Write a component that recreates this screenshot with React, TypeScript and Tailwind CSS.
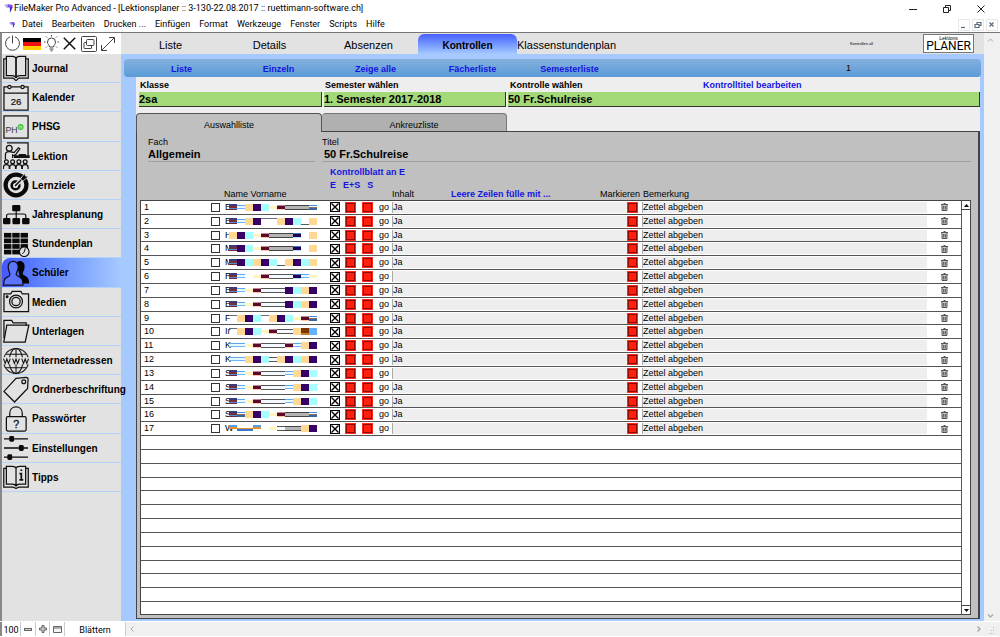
import React from "react";

const stroke = { fill: "none", stroke: "#111", strokeWidth: 1.3 } as const;

const icons: Record<string, React.ReactNode> = {
  Journal: (
    <g {...stroke}>
      <path d="M3.5 4H.8v20h9.5c1.6 0 1.8 2.2 3.2 2.2s1.600-2.200 3.200-2.200h9.500V4h-2.700" />
      <path d="M3.500 1.500h6c2.500 0 4 1.200 4 3.200v19c-.5-1.600-2-2.400-4-2.400h-6z" />
      <path d="M23.500 1.500h-6c-2.500 0-4 1.200-4 3.200v19c.5-1.600 2-2.400 4-2.400h6z" />
    </g>
  ),
  Kalender: (
    <g {...stroke}>
      <path d="M5 3H1v24h25V3h-4M8.500 3h10M1 9.500h25" />
      <circle cx="6.700" cy="3" r="1.700" />
      <circle cx="20.300" cy="3" r="1.700" />
      <text x="8" y="22" fontSize="10" fontWeight="400" fill="#111" stroke="#111" strokeWidth=".2">26</text>
    </g>
  ),
  PHSG: (
    <g {...stroke}>
      <rect x="1" y="3" width="25" height="23" />
      <text x="2.500" y="20.500" fontSize="9" fontWeight="400" fill="#333" stroke="none">PH</text>
      <circle cx="18.200" cy="14.500" r="3.200" fill="#4fc646" stroke="none" />
      <path d="M16.500 14h3.500M16.500 15.500h3.500" stroke="#c9f5c5" strokeWidth=".7" />
    </g>
  ),
  Lektion: (
    <g {...stroke}>
      <path d="M4 1h22v14" />
      <circle cx="6.500" cy="6.500" r="3" fill="#e2e2e2" />
      <path d="M2.500 18v-5c0-2 1.500-3 4-3 3 0 4 1.500 5.500.5L16 6l1.500 1.200-4 5.300c-1 1.200-2.500 1.500-3.500 1v3" />
      <path d="M12 16v-1.500h5V13h6v1.500h4V16z" fill="#111" />
      {[3.5, 10, 16.5, 23].map((x) => (
        <g key={x}>
          <circle cx={x} cy="20.500" r="2" />
          <path d={`M${x - 3} 28v-2c0-1.800 1-2.600 3-2.600s3 .8 3 2.600v2`} />
        </g>
      ))}
    </g>
  ),
  Lernziele: (
    <g>
      <circle cx="13.500" cy="14.500" r="10.800" fill="none" stroke="#0a0a0a" strokeWidth="4.400" />
      <circle cx="13" cy="15" r="4" fill="none" stroke="#0a0a0a" strokeWidth="2.600" />
      <path d="M13 15L21 7" stroke="#e2e2e2" strokeWidth="4" />
      <path d="M12.500 15.500L22 6" stroke="#0a0a0a" strokeWidth="1.500" />
      <path d="M18.500 7.500l4-5 .8 2.700 3 .6-4.800 4-2.500.2z" fill="#0a0a0a" stroke="#e2e2e2" strokeWidth=".8" />
    </g>
  ),
  Jahresplanung: (
    <g fill="#0a0a0a">
      <rect x="9.500" y="4" width="8.500" height="6.500" rx="1.300" />
      <rect x="0" y="17.500" width="7.700" height="6.500" rx="1.300" />
      <rect x="9.800" y="17.500" width="7.900" height="6.500" rx="1.300" />
      <rect x="19.800" y="17.500" width="7.700" height="6.500" rx="1.300" />
      <path d="M13.700 10v8M3.700 18v-2.500q0-2 2-2h16q2 0 2 2V18" fill="none" stroke="#0a0a0a" strokeWidth="1.200" />
    </g>
  ),
  Stundenplan: (
    <g fill="#0a0a0a">
      {[0, 1, 2, 3].map((r) =>
        [0, 1, 2].map((c) => (
          <rect key={`${r}${c}`} x={1 + c * 8.6} y={3 + r * 5.8} width="7.700" height="4.900" />
        )),
      )}
      <circle cx="22" cy="22.500" r="5" fill="#e2e2e2" stroke="#0a0a0a" strokeWidth="1.200" />
      <path d="M23 19l-1 4-2 1.500" fill="none" stroke="#0a0a0a" />
    </g>
  ),
  Schüler: (
    <g>
      <path d="M14 4c1.500-2 3.500-2.500 5.500-1.500 3 1 3.300 4.500 2.600 8-.5 2-1.700 3-1.600 5 1 2 6.200 2 6.500 8v2h-8z" fill="#050505" />
      <path
        d="M10.500 2.500c3.500 0 5.500 2.500 5.200 6.500-.2 3-2 4.500-2 7 .8 2 6.300 2.500 6.800 7.500l.1 3.500H.8c-.2-3 .2-5.500 1.700-7 2-1.500 4.500-1.700 4.700-4C7 14 5.600 12 5.400 9c-.3-4 1.600-6.500 5.100-6.500z"
        fill="#5c74ff" stroke="#111" strokeWidth="1.300"
      />
    </g>
  ),
  Medien: (
    <g {...stroke}>
      <path d="M1 6h7l1.500-2.500h9L20 6h6.500v18.500H1z" />
      <circle cx="13.500" cy="14" r="6.700" />
      <circle cx="13.500" cy="14" r="4.300" />
      <circle cx="4.300" cy="9" r=".9" fill="#111" />
    </g>
  ),
  Unterlagen: (
    <g {...stroke}>
      <path d="M1 22V3.500h8l1.500 2.500H24v3" />
      <path d="M4 8.500h22.800L23 26H.8z" />
    </g>
  ),
  Internetadressen: (
    <g {...stroke} strokeWidth={1.1}>
      <circle cx="13.500" cy="14.500" r="13" />
      <ellipse cx="13.500" cy="14.500" rx="7" ry="13" />
      <path d="M13.500 1.500v26M3 7.500h21M3 21.500h21" />
      <rect x="0" y="10.500" width="27" height="7.500" fill="#e2e2e2" stroke="none" />
      <path d="M.5 12l1.800 5L4 12.500l1.700 4.500L7.500 12M10 12l1.800 5 1.700-4.500 1.700 4.500 1.800-5M19.500 12l1.800 5 1.700-4.500 1.700 4.500 1.800-5" />
    </g>
  ),
  Ordnerbeschriftung: (
    <g {...stroke}>
      <path d="M13.500 2.500L24 1.500q2 0 2 2l-.5 9.500L12 27 1 16z" />
      <circle cx="21.500" cy="6" r="2" />
    </g>
  ),
  Passwörter: (
    <g {...stroke}>
      <rect x="3.500" y="12" width="20.500" height="15" rx="1.500" />
      <path d="M7 12V8.500c0-4 2.800-6.500 6.500-6.500S20 4.500 20 8.500V12" />
      <text x="10.500" y="23.500" fontSize="11" fontWeight="400" fill="#111" stroke="#111" strokeWidth=".3">?</text>
    </g>
  ),
  Einstellungen: (
    <g fill="#0a0a0a">
      <path d="M1 5h25M1 14.500h25M1 24h25" stroke="#0a0a0a" strokeWidth="1.300" />
      <rect x="6.500" y="2" width="5" height="6" rx="1.500" />
      <rect x="16.500" y="11.500" width="5" height="6" rx="1.500" />
      <rect x="4.500" y="21" width="5" height="6" rx="1.500" />
    </g>
  ),
  Tipps: (
    <g {...stroke}>
      <path d="M3.500 5.500H.8V25h9.500c1.600 0 1.800 1.200 3.200 1.200s1.600-1.200 3.200-1.200h9.500V5.500h-2.700" />
      <path d="M3.500 3.500h6c2.500 0 4 1 4 2.500v18c-.5-1.300-2-2-4-2h-6zM23.500 3.500h-6c-2.500 0-4 1-4 2.500v18c.5-1.300 2-2 4-2h6z" />
      <path d="M17 11h2v6.500M17 17.500h4M18 7.500h2" strokeWidth="1.800" />
    </g>
  ),
};

const students: [string, string, boolean][] = [
  ["B", "mbopcydgggt", true],
  ["B", "mbopuuopclo", true],
  ["H", "opcydgggk.o", true],
  ["M", "mpcydgggk.o", true],
  ["M", "mpcopclopco", true],
  ["R", "mb.ydwwwkby", false],
  ["B", "mbydwwwpcop", true],
  ["B", "mbydwwwpcop", true],
  ["F", "uopcuopcydt", true],
  ["Ir", "uopcydwwonB", true],
  ["K", "bbydwwwdbop", true],
  ["K", "bbopcwopcop", true],
  ["S", "mbydwwwbopc", false],
  ["S", "mbydwwwbopc", true],
  ["S", "mbydwwwbopc", true],
  ["S", "mtopcydgggt", true],
  ["W", "vxxv.ywggop", false],
];

/* Each letter is one 8px block: a list of [top, height, colour] bands. */
const bands: Record<string, [number, number, string][]> = {
  m: [[1, 2, "#3a3a80"], [3, 2, "#7a2f2f"], [5, 1, "#4f8fe0"], [6, 1, "#702838"]],
  b: [[2, 1, "#5aa8f0"], [3, 2, "#e8faff"], [5, 1, "#6ab6ff"]],
  o: [[1, 7, "#ffd994"]],
  p: [[1, 7, "#360066"]],
  c: [[1, 7, "#a6ffff"]],
  y: [[3, 3, "#fff5bd"]],
  d: [[2, 1, "#c08888"], [3, 3, "#5a0a2c"], [6, 1, "#ffc8a0"]],
  g: [[2, 1, "#444444"], [3, 3, "#b4b4b4"], [6, 1, "#444444"]],
  w: [[2, 1, "#555555"], [3, 3, "#f4f8ff"], [6, 1, "#555555"]],
  k: [[2, 1, "#3a78c8"], [3, 3, "#240052"], [6, 1, "#b0e0ff"]],
  t: [[2, 1, "#3a90e0"], [4, 1, "#8a7060"], [5, 2, "#3868a0"]],
  u: [[1, 1, "#666f80"]],
  l: [[7, 1, "#55606a"]],
  v: [[1, 2, "#4fa0f0"], [3, 2, "#e09030"]],
  x: [[4, 1, "#e09030"], [5, 2, "#3a78c8"]],
  n: [[1, 5, "#7a3800"], [6, 2, "#c08030"]],
  B: [[1, 7, "#62b0ff"]],
};

const NameBlur = ({ code }: { code: string }) => (
  <svg width="88" height="9" shapeRendering="crispEdges" className="shrink-0" aria-hidden="true">
    {code.split("").flatMap((ch, i) =>
      (bands[ch] || []).map(([y, h, fill], j) => (
        <rect key={`${i}-${j}`} x={i * 8} y={y} width="8" height={h} fill={fill} />
      )),
    )}
  </svg>
);

const RedButton = ({ label }: { label: string }) => (
  <button aria-label={label} className="flex size-[11px] items-center justify-center bg-[#ff2a1a]">
    <span className="size-[9px] border border-[#8c0a00] bg-[#ff2010]" />
  </button>
);

const Trash = () => (
  <svg width="7" height="8" viewBox="0 0 7 8" aria-hidden="true">
    <path d="M0 1.500h7M2.500.5h2M1 2v5.500h5V2M2.700 3v3.500M4.300 3v3.500" fill="#ccc" stroke="#444" strokeWidth=".9" />
  </svg>
);

const Toolbar = () => (
  <div className="flex h-[21px] items-center bg-white">
    <button aria-label="Beenden" className="ml-[2px] w-[17px]">
      <svg width="17" height="17" viewBox="0 0 17 17" fill="none" stroke="#444" strokeWidth="1"><path d="M6 1.800a7 7 0 1 0 5 0M8.500.5v8" /></svg>
    </button>
    <button aria-label="Deutsch" className="ml-[2px] flex h-3 w-[18px] flex-col">
      <span className="w-full flex-1 bg-black" /><span className="w-full flex-1 bg-[#e11]" /><span className="w-full flex-1 bg-[#fc0]" />
    </button>
    <button aria-label="Hinweis" className="ml-[2px]">
      <svg width="17" height="17" viewBox="0 0 17 17" fill="none" stroke="#444" strokeWidth="1">
        <path d="M6.500 12c0-2-2-2.500-2-5a4 4 0 0 1 8 0c0 2.500-2 3-2 5zM6.500 14h4M7.500 15.800h2M8.500 0v1.500M1 7h1.500M14.500 7H16M3 1.500l1 1M14 1.500l-1 1M3 12.500l1-1M14 12.500l-1-1" />
      </svg>
    </button>
    <button aria-label="Schliessen" className="ml-[3px]">
      <svg width="13" height="13" viewBox="0 0 13 13"><path d="M.8.800l11.400 11.400M12.200.8L.8 12.200" stroke="#111" strokeWidth="1.500" /></svg>
    </button>
    <button aria-label="Neues Fenster" className="ml-[5px]">
      <svg width="16" height="16" viewBox="0 0 16 16" fill="none" stroke="#444"><rect x=".5" y=".5" width="15" height="15" rx="1" /><rect x="5.500" y="3.500" width="7.500" height="6" rx="1" /><path d="M5.500 6.500H3.500q-.5 0-.5.5v5q0 .5.5.5h6.500q.5 0 .5-.5v-2.500" /></svg>
    </button>
    <button aria-label="Vergrössern" className="ml-[3px]">
      <svg width="16" height="16" viewBox="0 0 16 16" fill="none" stroke="#444"><path d="M1.500 14.500l13-13M9 1.500h5.500V7M1.500 9v5.500H7" /></svg>
    </button>
  </div>
);

const AppMark = ({ className }: { className: string }) => (
  <svg viewBox="0 0 10 10" className={className} aria-hidden="true">
    <path d="M.5 1l4.500-.8L9.500 1v2.500l-3 6.300V4H3z" fill="#7a4be0" />
    <path d="M.5 1l4-.5L4 4 2.500 3z" fill="#b9b4f0" />
    <path d="M6.500 4l3-1L7 9.500z" fill="#3d2bb8" />
  </svg>
);

const Sidebar = () => (
  <aside className="relative z-10 flex w-[119px] shrink-0 flex-col bg-[#e2e2e2]">
    <Toolbar />
    <nav className="grid h-[438px] grid-cols-1 grid-rows-[repeat(15,minmax(0,1fr))]">
      {Object.keys(icons).map((name) => (
        <button
          key={name}
          className={
            "flex min-w-0 items-center gap-[2px] whitespace-nowrap border-b border-[#b4d2fa] pl-px pt-px text-left text-[10px] font-bold " +
            (name === "Schüler" ? "rounded-tl-lg bg-linear-to-r from-[#4457ff] to-[#a6c9ff]" : "")
          }
        >
          <svg viewBox="0 0 28 29" className="h-[28px] w-[27px] shrink-0" aria-hidden="true">{icons[name]}</svg>
          {name}
        </button>
      ))}
    </nav>
  </aside>
);

const field =
  "h-[15px] w-full appearance-none border-b border-r border-[#333] bg-[#a3d977] text-[11px] font-bold leading-[13px] outline-none";

const Filters = () => (
  <div className="grid grid-cols-[183px_182px_1fr] gap-x-[2px] pl-[3px] text-[9px] font-bold">
    <div>
      <label htmlFor="klasse" className="block h-[15px] pl-px leading-4">Klasse</label>
      <select id="klasse" className={field}><option>2sa</option></select>
    </div>
    <div>
      <label htmlFor="semester" className="block h-[15px] pl-px leading-4">Semester wählen</label>
      <select id="semester" className={field}><option>1. Semester 2017-2018</option></select>
    </div>
    <div>
      <div className="flex h-[15px] pl-[2px] leading-4">
        <label htmlFor="kontrolle" className="w-[193px]">Kontrolle wählen</label>
        <a href="#titel" className="text-[#1414e0]">Kontrolltitel bearbeiten</a>
      </div>
      <select id="kontrolle" className={field}><option>50 Fr.Schulreise</option></select>
    </div>
  </div>
);

const cell = "border-b border-[#555] p-0 align-middle";

const StudentTable = () => (
  <div className="flex min-h-0 flex-1 border border-[#444] bg-white">
    <table className="h-full min-w-0 flex-1 table-fixed border-separate border-spacing-0 text-[9px] leading-[11px]">
      <colgroup>
        <col className="w-[70px]" /><col className="w-[14px]" /><col className="w-[105px]" /><col className="w-[15px]" />
        <col className="w-[17px]" /><col className="w-[17px]" /><col className="w-[13px]" /><col className="w-[235px]" />
        <col className="w-[15px]" /><col /><col className="w-[34px]" />
      </colgroup>
      <tbody>
        {students.map(([initial, code, yes], i) => (
          <tr key={i} className="h-[13px]">
            <td className={cell + " pl-[3px]!"}>{i + 1}</td>
            <td className={cell}>
              <input type="checkbox" aria-label={`Auswahl ${i + 1}`} className="block size-[9px] appearance-none border border-[#333] bg-white" />
            </td>
            <td className={cell}>
              <div className="flex items-center"><span className="w-1 shrink-0">{initial}</span><NameBlur code={code} /></div>
            </td>
            <td className={cell}>
              <span className="relative block size-[10px]">
                <input type="checkbox" defaultChecked aria-label={`Kontrollblatt E ${i + 1}`} className="peer block size-[10px] appearance-none border border-black bg-white" />
                <svg viewBox="0 0 10 10" className="pointer-events-none absolute inset-0 hidden size-[10px] peer-checked:block" aria-hidden="true">
                  <path d="M1.500 1.500l7 7M8.500 1.500l-7 7" stroke="#000" strokeWidth="1.400" />
                </svg>
              </span>
            </td>
            <td className={cell}><RedButton label={`Kontrollblatt E+S ${i + 1}`} /></td>
            <td className={cell}><RedButton label={`Kontrollblatt S ${i + 1}`} /></td>
            <td className={cell}><button className="block h-[11px]">go</button></td>
            <td className={cell}>
              <input aria-label={`Inhalt ${i + 1}`} defaultValue={yes ? "Ja" : ""} className="block h-[11px] w-full border-l border-[#aaa] bg-[#eee] outline-none" />
            </td>
            <td className={cell}><RedButton label={`Markieren ${i + 1}`} /></td>
            <td className={cell}>
              <input aria-label={`Bemerkung ${i + 1}`} defaultValue="Zettel abgeben" className="block h-[11px] w-full border-l border-[#aaa] bg-[#eee] outline-none" />
            </td>
            <td className={cell}><button aria-label={`Zeile ${i + 1} löschen`} className="mx-auto block"><Trash /></button></td>
          </tr>
        ))}
        {Array.from({ length: 13 }, (_, i) => (
          <tr key={i} className={i < 12 ? "h-[13px]" : "h-[11px]"}><td colSpan={11} className={i < 12 ? cell : "p-0"} /></tr>
        ))}
      </tbody>
    </table>
    <div className="flex w-[9px] shrink-0 flex-col justify-between border-l border-[#555]">
      <button aria-label="Nach oben" className="flex h-[9px] items-center justify-center border-b border-[#444]">
        <svg width="5" height="3"><path d="M0 3L2.500 0 5 3z" /></svg>
      </button>
      <button aria-label="Nach unten" className="flex h-[9px] items-center justify-center border-t border-[#444]">
        <svg width="5" height="3"><path d="M0 0L2.500 3 5 0z" /></svg>
      </button>
    </div>
  </div>
);

const blue = "font-bold text-[#1414e0]";

const Panel = () => (
  <section className="mt-[6px] flex min-h-0 flex-1 flex-col">
    <div role="tablist" className="flex h-[18px] text-[9px]">
      <button role="tab" aria-selected="true" className="relative z-10 -mb-px w-[186px] rounded-t border border-b-0 border-[#555] bg-[#c0c0c0] pt-[5px]">Auswahlliste</button>
      <button role="tab" aria-selected="false" className="w-[185px] rounded-t border border-b-0 border-l-0 border-[#777] bg-[#b0b0b0] pt-[5px]">Ankreuzliste</button>
    </div>
    <div className="flex min-h-0 flex-1 flex-col border border-r-2 border-[#444] bg-[#c0c0c0] pb-[3px] pl-[3px] pr-[7px]">
      <div className="grid grid-cols-[167px_1fr] gap-x-[7px] pl-2">
        <div className="border-b border-[#a0a0a0] pb-px">
          <div className="mt-1 text-[9px] leading-[12px]">Fach</div>
          <div className="text-[11px] font-bold leading-[12px]">Allgemein</div>
        </div>
        <div className="border-b border-[#a0a0a0] pb-px">
          <div className="mt-1 text-[9px] leading-[12px]">Titel</div>
          <div className="pl-[2px] text-[11px] font-bold leading-[12px]">50 Fr.Schulreise</div>
        </div>
      </div>
      <div className="flex h-[38px] items-end text-[9px] leading-[12px]">
        <span className="w-[190px] pl-[84px]">Name Vorname</span>
        <div className={"flex h-full w-[62px] flex-col whitespace-nowrap pt-1 " + blue}>
          <span>Kontrollblatt an E</span>
          <div className="flex gap-[7px] pt-px"><span>E</span><span>E+S</span><span>S</span></div>
        </div>
        <span className="w-[59px]">Inhalt</span>
        <a href="#fuellen" className={"w-[149px] " + blue}>Leere Zeilen fülle mit ...</a>
        <span className="w-[43px]">Markieren</span>
        <span>Bemerkung</span>
      </div>
      <StudentTable />
    </div>
  </section>
);

const tabs = ["Liste", "Details", "Absenzen", "Kontrollen", "Klassenstundenplan"];
const subTabs = ["Liste", "Einzeln", "Zeige alle", "Fächerliste", "Semesterliste"];

const Main = () => (
  <main className="flex min-w-0 flex-1 flex-col bg-[#a6c9ff]">
    <nav className="flex h-[21px] items-end bg-[#e2e2e2] text-[11px]">
      {tabs.map((t) => (
        <button
          key={t}
          className={
            "h-5 w-[99px] whitespace-nowrap pt-[2px] " +
            (t === "Kontrollen" ? "rounded-t-md bg-linear-to-b from-[#4a5cff] to-[#a6c9ff] text-[10px] font-bold" : "")
          }
        >
          {t}
        </button>
      ))}
      <div className="flex h-full flex-1 items-center justify-end gap-[50px] pr-[10px]">
        <span className="text-[4px]">Kontrollen all</span>
        <div className="flex h-[19px] w-[51px] flex-col items-center justify-center border border-[#777] bg-white">
          <span className="text-[5px] leading-[5px]">Lektions</span>
          <span className="font-[Roboto,'Liberation_Sans',sans-serif] text-[12px] leading-[11px]">PLANER</span>
        </div>
      </div>
    </nav>
    <nav className="ml-[3px] mr-[3px] mt-[5px] flex h-[18px] shrink-0 items-center rounded bg-linear-to-b from-[#85b0dc] to-[#5a9bd8] pl-[9px] text-[9px] font-bold text-[#1414e0]">
      {subTabs.map((t) => (
        <button key={t} className="w-[97px] pt-[3px]">{t}</button>
      ))}
      <span className="ml-auto w-[135px] pt-px font-normal text-black">1</span>
    </nav>
    <div className="mb-[2px] ml-[15px] mr-1 flex min-h-0 flex-1 flex-col bg-[#eee]">
      <Filters />
      <Panel />
    </div>
  </main>
);

const menus = ["Datei", "Bearbeiten", "Drucken ...", "Einfügen", "Format", "Werkzeuge", "Fenster", "Scripts", "Hilfe"];

const WindowBars = () => (
  <header className="border-b border-[#777] font-[Roboto,'Open_Sans',sans-serif]">
    <div className="flex h-[17px] items-center pl-1 text-[9px]">
      <AppMark className="size-[9px]" />
      <h1 className="ml-px flex-1 pt-px">FileMaker Pro Advanced - [Lektionsplaner :: 3-130-22.08.2017 :: ruettimann-software.ch]</h1>
      <div className="flex items-center gap-[26px] pr-[15px]">
        <button aria-label="Minimieren"><svg width="8" height="8"><path d="M0 4.500h8" stroke="#222" /></svg></button>
        <button aria-label="Verkleinern"><svg width="8" height="8" fill="none" stroke="#222"><path d="M.5 2.500h5v5h-5zM2.500 2V.5h5v5H6" /></svg></button>
        <button aria-label="Schliessen"><svg width="8" height="8"><path d="M.5.500l7 7M7.500.5l-7 7" stroke="#222" /></svg></button>
      </div>
    </div>
    <div className="flex h-[15px] items-center pl-[9px] text-[9px]">
      <AppMark className="size-[6px]" />
      <nav className="ml-[7px] flex flex-1 gap-[9px]">
        {menus.map((m) => <button key={m}>{m}</button>)}
      </nav>
      <div className="flex gap-[2px] pr-[2px]">
        {["M1 6.500h4", "M1 3.500h4v3H1zM3 3V1.500h4v3H5.500", "M1.500 1.500l4 4M5.500 1.500l-4 4"].map((d, i) => (
          <button key={d} aria-label={["Fenster minimieren", "Fenster wiederherstellen", "Fenster schliessen"][i]} className="flex h-3 w-3 items-center justify-center border border-[#e8e8e8]">
            <svg width="8" height="8" fill="none" stroke="#5a6b80" strokeWidth="1.200"><path d={d} /></svg>
          </button>
        ))}
      </div>
    </div>
  </header>
);

const Footer = () => (
  <footer className="mt-px flex h-[14px] shrink-0 items-stretch border-l-2 border-[#888] bg-[#f0f0f0] font-[Roboto,'Open_Sans',sans-serif] text-[9px] leading-[16px]">
    <span className="w-[18px] bg-white text-center">100</span>
    <button aria-label="Verkleinern" className="flex w-[15px] items-center justify-center border-l border-[#ccc] bg-white">
      <svg width="8" height="3"><rect x=".5" y=".5" width="7" height="2" fill="#ccc" stroke="#666" /></svg>
    </button>
    <button aria-label="Vergrössern" className="flex w-[14px] items-center justify-center border-l border-[#ccc] bg-white">
      <svg width="8" height="8"><path d="M3 .500h2V3h2.500v2H5v2.500H3V5H.5V3H3z" fill="#ccc" stroke="#666" /></svg>
    </button>
    <button aria-label="Statusleiste" className="flex w-[15px] items-center justify-center border-l border-[#ccc] bg-white">
      <svg width="9" height="7" fill="#f4f4f4" stroke="#666"><path d="M.5.500h8v6h-8zM.5 2h8" /></svg>
    </button>
    <button className="w-[62px] border-x border-[#ccc] bg-white">Blättern</button>
    <div className="flex flex-1 items-center justify-between pl-1 pr-[19px]">
      <svg width="4" height="6"><path d="M3.500.500L1 3l2.500 2.500" fill="none" stroke="#aaa" /></svg>
      <svg width="4" height="6"><path d="M.5.500L3 3 .5 5.500" fill="none" stroke="#aaa" strokeWidth="1.500" /></svg>
    </div>
    <svg width="8" height="14" className="-ml-[12px] mr-1" fill="#bbb"><path d="M5 5h1v1H5zM3 8h1v1H3zM5 8h1v1H5zM1 11h1v1H1zM3 11h1v1H3zM5 11h1v1H5z" /></svg>
  </footer>
);

export default function App() {
  return (
    <div className="flex h-screen flex-col bg-white pb-px font-['Liberation_Sans',Arial,sans-serif] text-black">
      <WindowBars />
      <div className="flex min-h-0 flex-1 border-l-2 border-[#888]">
        <Sidebar />
        <Main />
        <div className="flex w-4 shrink-0 flex-col justify-between bg-[#f0f0f0] pb-[2px] pl-[3px] pt-1">
          <svg width="7" height="6"><path d="M1 4.500L3.500 2 6 4.500" fill="none" stroke="#aaa" /></svg>
          <svg width="7" height="6"><path d="M1 1.500L3.500 4 6 1.500" fill="none" stroke="#aaa" strokeWidth="1.500" /></svg>
        </div>
      </div>
      <Footer />
    </div>
  );
}
